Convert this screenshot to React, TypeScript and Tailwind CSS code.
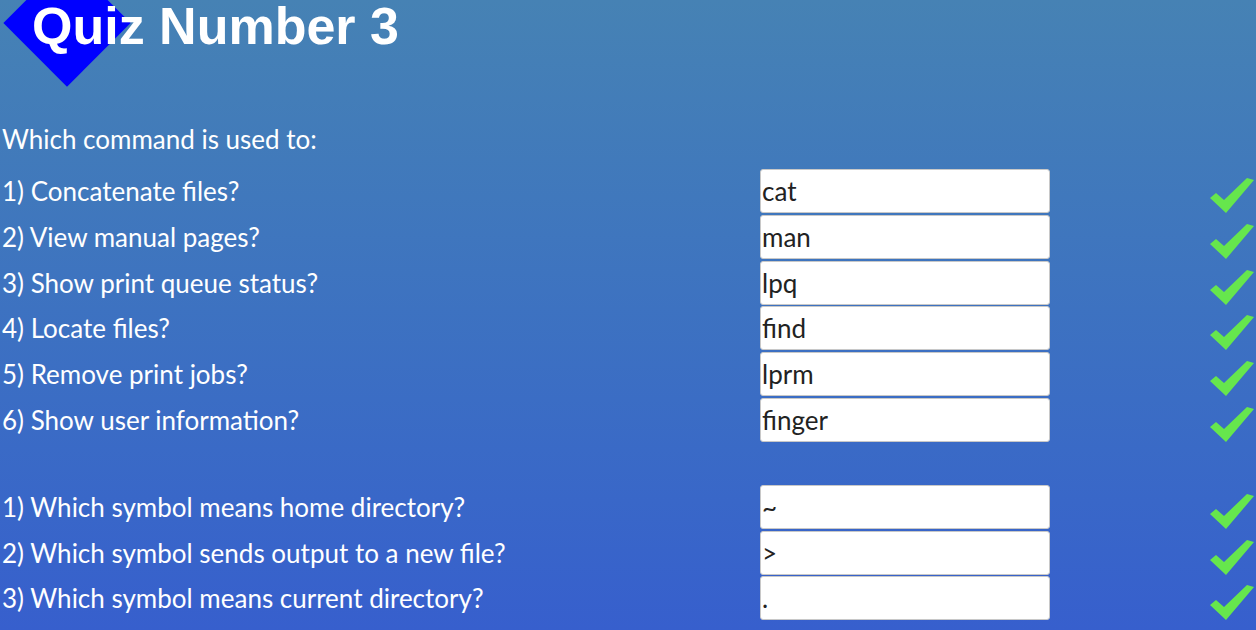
import React from 'react';

interface Question {
  label: string;
  answer: string;
}

const commands: Question[] = [
  { label: '1) Concatenate files?', answer: 'cat' },
  { label: '2) View manual pages?', answer: 'man' },
  { label: '3) Show print queue status?', answer: 'lpq' },
  { label: '4) Locate files?', answer: 'find' },
  { label: '5) Remove print jobs?', answer: 'lprm' },
  { label: '6) Show user information?', answer: 'finger' },
];

const symbols: Question[] = [
  { label: '1) Which symbol means home directory?', answer: '~' },
  { label: '2) Which symbol sends output to a new file?', answer: '>' },
  { label: '3) Which symbol means current directory?', answer: '.' },
];

// Heavy green check mark shown next to a correct answer
const Check: React.FC = () => (
  <svg width="44" height="36" viewBox="0 0 44 36" className="mt-[8px]">
    <path d="M0 21 L6 16 L14 23 L37 1 L44 3 L16 36 Z" fill="#66e64d" />
  </svg>
);

const Row: React.FC<{ q: Question }> = ({ q }) => (
  <div className="flex items-center h-[45.8px]">
    <div className="w-[760px] pl-[2px] pt-[1px] text-white text-[26px] leading-[1.2]">{q.label}</div>
    <input
      readOnly
      value={q.answer}
      className="w-[290px] h-[44px] bg-white border border-[#c8c8c8] rounded-[3px] pl-[1px] text-[#222] text-[26px] outline-none"
      style={{ fontFamily: 'Lato, sans-serif' }}
    />
    <div className="flex-1 flex justify-end pr-[2px]">
      <Check />
    </div>
  </div>
);

export default function App() {
  return (
    <div
      className="min-h-screen overflow-hidden bg-gradient-to-b from-[#4682b4] to-[#375fcd]"
      style={{ fontFamily: 'Lato, sans-serif' }}
    >
      <div className="relative h-[124px]">
        <div className="absolute left-[22px] top-[-22px] w-[90px] h-[90px] bg-[#0000ff] rotate-45" />
        <h1
          className="relative pl-[32px] text-white font-bold text-[52px] leading-none"
          style={{ fontFamily: '"Liberation Sans", Arial, sans-serif' }}
        >
          Quiz Number 3
        </h1>
      </div>
      <p className="pl-[2px] text-white text-[26px] leading-[1.2] mb-[13px]">Which command is used to:</p>
      <div className="flex flex-col">
        {commands.map((q) => (
          <Row key={q.label} q={q} />
        ))}
      </div>
      <div className="flex flex-col mt-[41px]">
        {symbols.map((q) => (
          <Row key={q.label} q={q} />
        ))}
      </div>
    </div>
  );
}
